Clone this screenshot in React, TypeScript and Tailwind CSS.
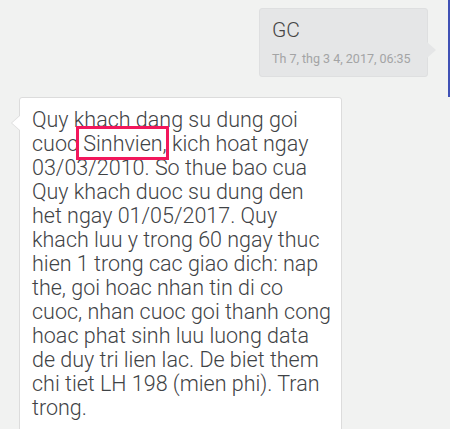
import React from 'react';

const lines = [
  'Quy khach dang su dung goi',
  'SINHVIEN',
  '03/03/2010. So thue bao cua',
  'Quy khach duoc su dung den',
  'het ngay 01/05/2017. Quy',
  'khach luu y trong 60 ngay thuc',
  'hien 1 trong cac giao dich: nap',
  'the, goi hoac nhan tin di co',
  'cuoc, nhan cuoc goi thanh cong',
  'hoac phat sinh luu luong data',
  'de duy tri lien lac. De biet them',
  'chi tiet LH 198 (mien phi). Tran',
  'trong.',
];

const App: React.FC = () => {
  return (
    <div
      className="relative w-[450px] h-[429px] overflow-hidden bg-[#f1f2f1]"
      style={{ fontFamily: 'Roboto, "Noto Sans", sans-serif' }}
    >
      {/* scroll indicator */}
      <div className="absolute right-0 top-0 w-[2px] h-[97px] bg-[#3f51b5]"></div>

      {/* sent */}
      <div className="flex justify-end pt-[8px] pr-[22px]">
        <div className="relative w-[169px] h-[69px] rounded-[3px] bg-[#e5e6e7] border border-[#dedfe0] pl-[12px] pt-[7px]">
          <p className="text-[21px] leading-[28px] text-[#454545] font-light">GC</p>
          <p className="mt-[6px] text-[12.5px] leading-[18px] text-[#a3a4a5]">Th 7, thg 3 4, 2017, 06:35</p>
          <div className="absolute right-[-9px] top-[33px] w-0 h-0 border-y-[8px] border-y-transparent border-l-[9px] border-l-[#e5e6e7]"></div>
        </div>
      </div>

      {/* received */}
      <div className="pl-[19px] pt-[20px]">
        <div className="relative w-[323px] rounded-[3px] bg-white border border-[#dcdcdc] pl-[12px] pt-[10px] pb-[20px]">
          <div className="absolute left-[-9px] top-[17px] w-0 h-0 border-y-[8px] border-y-transparent border-r-[9px] border-r-[#dcdcdc]"></div>
          <div className="absolute left-[-8px] top-[17px] w-0 h-0 border-y-[8px] border-y-transparent border-r-[9px] border-r-white"></div>
          <div className="text-[21.5px] leading-[24px] font-light text-[#3f4346] whitespace-nowrap">
            {lines.map((line, i) =>
              line === 'SINHVIEN' ? (
                <div key={i}>
                  cuoc{' '}
                  <span className="relative">
                    Sinhvien,
                    <span className="absolute left-[-7px] right-[-2px] top-[-5px] bottom-[-4px] border-[3.5px] border-[#f2175c]"></span>
                  </span>{' '}
                  kich hoat ngay
                </div>
              ) : (
                <div key={i}>{line}</div>
              )
            )}
          </div>
        </div>
      </div>
    </div>
  );
};

export default App;
